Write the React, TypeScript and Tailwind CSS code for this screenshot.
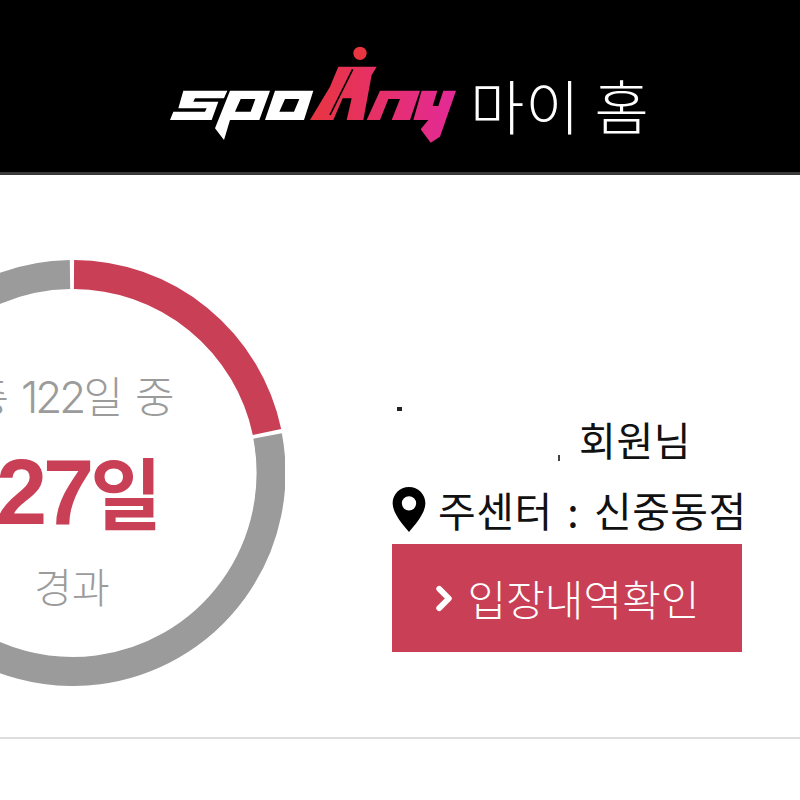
const kr = "font-['Noto_Sans_CJK_KR','Noto_Sans',sans-serif]";
const latinKr = "font-['Liberation_Sans','Noto_Sans_CJK_KR',sans-serif]";

function Logo() {
  return (
    <svg viewBox="0 0 960 390" className="w-[320px] h-[130px] shrink-0 blur-[0.6px]">
      <defs>
        <linearGradient id="lg" gradientUnits="userSpaceOnUse" x1="480" x2="918" y1="0" y2="0">
          <stop offset="0" stopColor="#e8353f" />
          <stop offset="1" stopColor="#e32a98" />
        </linearGradient>
      </defs>
      <g fill="#fff" fillRule="evenodd">
        <path d="M100 182H232L222 205H135L130 215H205L185 270H60L70 245H165L170 235H85Z" />
        <path d="M240 182H360L328 270H240L222 330L195 295ZM272 207L255 245H302L316 207Z" />
        <path d="M375 182H490L462 270H345ZM405 207L388 245H432L448 207Z" />
      </g>
      <circle cx="630" cy="70" r="20" fill="#e8353f" />
      <path fill="url(#lg)" d="M480 270L540 170L565 110H680L665 135L640 270H590L605 205H578L550 270Z" />
      <path d="M540 255L608 118" stroke="#000" strokeWidth="5" fill="none" />
      <path fill="url(#lg)" d="M690 182H810L780 270H725L750 207H715L690 270H650Z" />
      <path fill="url(#lg)" d="M815 182H862L848 228H865L880 182H918L870 320L842 338L812 298L835 270H790Z" />
    </svg>
  );
}

function Donut() {
  return (
    <div className="relative w-[426px] h-[426px] shrink-0">
      <svg viewBox="0 0 426 426" className="absolute inset-0 w-full h-full">
        <path d="M 211 14.5 A 198.5 198.5 0 1 0 408.6 176" fill="none" stroke="#9b9b9b" strokeWidth="29" />
        <path d="M 215 14.5 A 198.5 198.5 0 0 1 408 172" fill="none" stroke="#c93f55" strokeWidth="29" />
      </svg>
      <div className="absolute inset-0 flex flex-col items-center">
        <div className={`mt-[111px] text-[43px] leading-[52px] text-[#9b9b9b] font-light whitespace-nowrap ${latinKr}`}>
          총 <span className="font-['Inter'] text-[44px] tracking-[-3px] font-light">122</span>일 중
        </div>
        <div className={`mt-[20px] pl-[14px] text-[78px] leading-[96px] text-[#c93f55] font-bold whitespace-nowrap ${latinKr}`}>
          <span className="text-[92px] tracking-[-4px]">27</span>일
        </div>
        <div className={`mt-[14px] text-[41px] leading-[52px] text-[#9b9b9b] font-light ${kr}`}>경과</div>
      </div>
    </div>
  );
}

export default function App() {
  return (
    <div className={`w-[800px] h-[800px] bg-white overflow-hidden ${kr}`}>
      <header className="h-[175px] bg-black border-b-[3px] border-[#3a3a3a] flex items-start pl-[150px] pt-[30px]">
        <Logo />
        <span className="text-[59px] leading-[150px] text-white font-light tracking-[1px] whitespace-nowrap">마이 홈</span>
      </header>
      <main className="h-[564px] border-b-2 border-[#dddddd] flex items-start pt-[85px]">
        <div className="-ml-[141px]">
          <Donut />
        </div>
        <div className="ml-[107px] w-[350px] flex flex-col pt-[148px]">
          <div className="relative h-[62px] flex items-center justify-end pr-[51px] text-[40px] leading-none text-[#111] tracking-[0.5px]">
            회원님
            <span className="absolute left-[5px] -top-[1px] w-[5px] h-[4px] bg-[#222]" />
            <span className="absolute left-[166px] top-[47px] w-[2px] h-[6px] bg-[#444]" />
          </div>
          <div className="h-[74px] pt-[5px] flex items-center whitespace-nowrap text-[41px] leading-none text-[#111] tracking-[0.5px] [word-spacing:5px]">
            <svg viewBox="0 0 32 44" className="w-[34px] h-[45px] mr-[12px] shrink-0">
              <path
                fillRule="evenodd"
                d="M16 0C7 0 0 7 0 16c0 10 11 22 16 28 5-6 16-18 16-28C32 7 25 0 16 0zm0 9a7 7 0 1 1 0 14 7 7 0 0 1 0-14z"
                fill="#000"
              />
            </svg>
            주센터 : 신중동점
          </div>
          <button className="h-[108px] bg-[#c93f55] text-white flex items-center justify-center text-[42px] leading-none font-light">
            <svg viewBox="0 0 20 28" className="w-[20px] h-[27px] mr-[13px]">
              <path d="M4 4l10 10L4 24" fill="none" stroke="#fff" strokeWidth="6" strokeLinecap="round" strokeLinejoin="round" />
            </svg>
            입장내역확인
          </button>
        </div>
      </main>
    </div>
  );
}
